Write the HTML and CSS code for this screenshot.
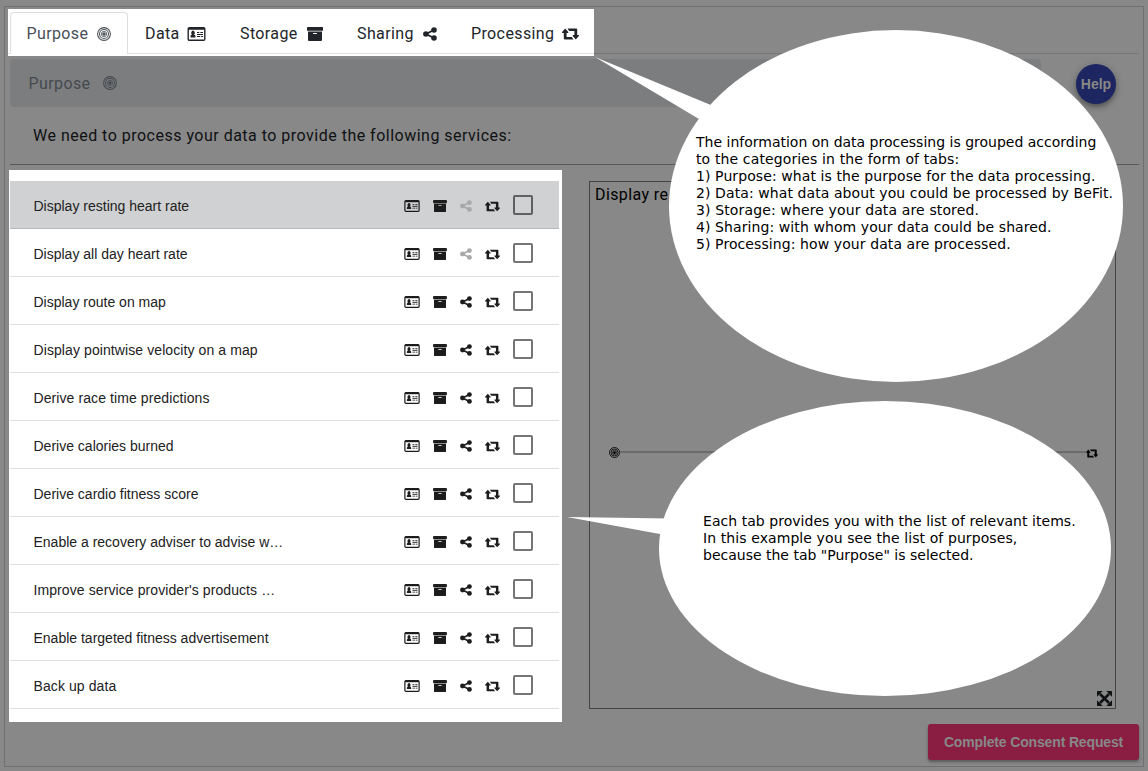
FILE: index.html
```html
<!DOCTYPE html>
<html lang="en">
<head>
<meta charset="utf-8">
<title>Consent request</title>
<link rel="stylesheet" href="styles.css">
</head>
<body>
<svg class="sprite" aria-hidden="true">
  <symbol id="target" viewBox="0 0 16 16"><g fill="none" stroke="currentColor" stroke-width="1.2"><circle cx="8" cy="8" r="7.3"/><circle cx="8" cy="8" r="5.100"/></g><circle cx="8" cy="8" r="3.100" fill="none" stroke="currentColor" stroke-width=".9"/><circle cx="8" cy="8" r="2" fill="currentColor"/></symbol>
  <symbol id="card" viewBox="0 0 18 14"><rect x=".7" y=".7" width="16.6" height="12.6" rx="1.2" fill="none" stroke="currentColor" stroke-width="1.4"/><path fill="currentColor" d="M1 1h16v1.7H1zM3 10.5V9.2q0-1.6 1.6-1.6a1.8 2.1 0 1 1 1.8 0Q8 7.6 8 9.2v1.3zM9.5 5h2.3v1.1H9.5zM12.8 5h2.7v1.1h-2.7zM9.5 7h6v1h-6zM9.500 9h3v1h-3zM13.300 9h2.200v1h-2.200z"/></symbol>
  <symbol id="archive" viewBox="0 0 16 14"><path fill="currentColor" fill-rule="evenodd" d="M.6 0h14.800q.6 0 .6.600V3.300q0 .5-.5.500H.5Q0 3.800 0 3.300V.6Q0 0 .6 0zM1 4.500h14V13q0 1-1 1H2q-1 0-1-1zM6.400 6q-.4 0-.4.500t.4.500h3.200q.4 0 .4-.500T9.600 6z"/></symbol>
  <symbol id="share" viewBox="0 0 14 14"><path d="M11 3 3 7l8 4" fill="none" stroke="currentColor" stroke-width="1.900"/><g fill="currentColor"><circle cx="11" cy="3" r="2.800"/><circle cx="2.900" cy="7" r="2.800"/><circle cx="11" cy="11" r="2.800"/></g></symbol>
  <symbol id="retweet" viewBox="0 0 17 12"><path fill="currentColor" d="M3.200.5 6.300 4.100q.4.800-.4.800H4.600v4.200h5.200l1.700 2.400H2.700q-.9 0-.9-.9V4.900H.500q-.8 0-.4-.8zM13.800 11.500l-3.100-3.600q-.4-.8.4-.8h1.300V2.900H7.200L5.500.5h8.800q.9 0 .9.900v5.700h1.300q.8 0 .4.800z"/></symbol>
  <symbol id="expand" viewBox="0 0 15 15"><path d="m3 3 9 9M12 3l-9 9" stroke="currentColor" stroke-width="2.600"/><path fill="currentColor" d="M0 .700Q0 0 .700 0h5L0 5.700zM15 .700Q15 0 14.300 0h-5L15 5.700zM0 14.300q0 .7.700.7h5L0 9.300zM15 14.300q0 .7-.7.700h-5L15 9.300z"/></symbol>
</svg>

<main class="frame">
  <nav class="tabs">
    <div class="tab-list">
      <a class="tab tab-purpose active"><span>Purpose</span><svg class="i-target"><use href="#target"/></svg></a>
      <a class="tab tab-data"><span>Data</span><svg class="i-card"><use href="#card"/></svg></a>
      <a class="tab tab-storage"><span>Storage</span><svg class="i-archive"><use href="#archive"/></svg></a>
      <a class="tab tab-sharing"><span>Sharing</span><svg class="i-share"><use href="#share"/></svg></a>
      <a class="tab tab-processing"><span>Processing</span><svg class="i-retweet"><use href="#retweet"/></svg></a>
    </div>
  </nav>
  <header class="heading">
    <div class="crumb"><span>Purpose</span><svg class="i-target"><use href="#target"/></svg></div>
    <button class="help">Help</button>
  </header>
  <p class="intro">We need to process your data to provide the following services:</p>
  <section class="content">
    <ul class="list" id="list"></ul>
    <div class="graph">
      <div class="graph-title">Display re</div>
      <div class="edge"><svg class="node-target"><use href="#target"/></svg><i></i><svg class="node-retweet"><use href="#retweet"/></svg></div>
      <svg class="expand"><use href="#expand"/></svg>
    </div>
  </section>
  <footer class="actions"><button class="complete">Complete Consent Request</button></footer>
</main>

<aside class="callout callout-tabs">
  <svg viewBox="595 30 528 352"><path d="M595 57 712 105.500 699 119z"/><ellipse cx="896" cy="206" rx="227" ry="176"/></svg>
  <div class="note"><p>The information on data processing is grouped according</p><p class="wider">to the categories in the form of tabs:</p><p class="wide">1) Purpose: what is the purpose for the data processing.</p><p class="wide">2) Data: what data about you could be processed by BeFit.</p><p class="wider">3) Storage: where your data are stored.</p><p class="wide">4) Sharing: with whom your data could be shared.</p><p class="wide">5) Processing: how your data are processed.</p></div>
</aside>
<aside class="callout callout-list">
  <svg viewBox="567 401 544 295"><path d="M567 517 668 518.500V535.500z"/><ellipse cx="885" cy="548.500" rx="226" ry="147.500"/></svg>
  <div class="note"><p class="slight">Each tab provides you with the list of relevant items.</p><p class="wide">In this example you see the list of purposes,</p><p>because the tab "Purpose" is selected.</p></div>
</aside>
<script src="list.js"></script>
</body>
</html>
```

FILE: styles.css
```css
* { box-sizing: border-box; }
body { margin: 0; width: 1148px; height: 771px; overflow: hidden; padding: 6px 4px; background: #888; color: #0f1113; font: 16px/20px Roboto, sans-serif; }
svg { display: block; flex: none; }
p, ul { margin: 0; padding: 0; }
button { border: 0; padding: 0; font: bold 14px "Liberation Sans", Arial, sans-serif; }
.sprite { position: absolute; width: 0; height: 0; }

.frame { width: 1140px; height: 761px; border: 1px solid #6e7073; padding: 2px 4px 0 3px; display: flex; flex-direction: column; }
.tabs { height: 47px; background: linear-gradient(#777, #777) 2px 44px / 1129px 1px no-repeat; }
.tab-list { width: 586px; height: 47px; padding: 3px 0 2px 2px; display: flex; background: linear-gradient(#dee2e6, #dee2e6) 0 44px / 586px 1px no-repeat #fff; }
.tab { flex: none; height: 42px; display: flex; align-items: center; justify-content: space-between; padding: 1px 17px 0; color: #212529; }
.tab.active { background: #fff; border: 1px solid #dcdfe2; border-bottom: 0; border-radius: 4px 4px 0 0; padding: 0 16px 0 15.500px; color: #495057; }
.tab span { letter-spacing: .38px; padding-top: 1px; }
.tab.active span { padding-top: 0; }
.tab-purpose { width: 118px; }
.tab-data { width: 95px; }
.tab-storage { width: 117px; }
.tab-sharing { width: 114px; }
.tab-processing { width: 142px; }
.i-target { width: 14px; height: 14px; }
.i-card { width: 19px; height: 14px; }
.i-archive { width: 16px; height: 14px; }
.i-share { width: 14px; height: 14px; }
.i-retweet { width: 17px; height: 12px; }

.heading { display: flex; align-items: center; margin: 3px 0 0 2px; height: 48px; }
.crumb { width: 1031px; height: 48px; border-radius: 4px; background: #7c7d7f; color: #464a4f; display: flex; align-items: center; gap: 12px; padding: 0 0 0 18.500px; }
.crumb span { letter-spacing: .4px; padding-top: 2px; }
.help { width: 40px; height: 40px; margin: 2px 0 0 35px; border-radius: 50%; background: #1d2660; color: #888; box-shadow: 0 3px 5px rgba(0,0,0,.3), 0 2px 10px rgba(0,0,0,.15); }
.intro { height: 58px; margin-left: 2px; padding: 19px 0 0 23px; border-bottom: 1px solid #595959; letter-spacing: .49px; }

.content { display: flex; align-items: flex-start; margin: 5px 0 0 1px; height: 552px; }
.list { width: 553px; height: 552px; padding: 11px 3px 0 1px; background: #fff; list-style: none; }
.row { height: 48px; display: flex; align-items: center; padding: 1px 26px 0 23.500px; border-bottom: 1px solid #dfdfdf; font: 14px "Liberation Sans", Arial, sans-serif; color: #212121; }
.row.selected { background: #d0d1d3; border-color: #b6b8ba; }
.label { flex: 1; padding-top: 2px; }
.loose { letter-spacing: .09px; }
.i { color: #1c1c1c; margin-top: 2px; }
.off { color: #a8a8a8; }
.row .i-card { width: 16px; height: 12px; margin-right: 13px; }
.row .i-archive { width: 14px; height: 12px; margin-right: 13px; }
.row .i-share { width: 12px; height: 12px; margin-right: 13px; }
.row .i-retweet { width: 15px; height: 11px; margin-right: 13px; }
.check { width: 20px; height: 20px; border: 2px solid #757575; border-radius: 2px; }
.selected .check { border-color: #5f6062; }

.graph { width: 527px; height: 528px; margin: 11px 0 0 27px; border: 1px solid #444; padding: 3px 3px 2px 5px; display: flex; flex-direction: column; color: #000; }
.graph-title { letter-spacing: .4px; }
.edge { display: flex; align-items: center; margin: 241px 14px 0 14px; height: 12px; }
.edge i { flex: 1; height: 2px; background: #6b6b6b; }
.node-target { width: 11px; height: 11px; margin-top: 1px; }
.node-retweet { width: 12px; height: 9px; margin-top: 2px; }
.expand { width: 15px; height: 15px; margin: auto 0 0 auto; color: #0f1113; }
.actions { display: flex; justify-content: flex-end; padding-top: 2px; }
.complete { width: 211px; height: 36px; border-radius: 3px; background: #891d42; color: #888; letter-spacing: -.15px; box-shadow: 0 2px 3px rgba(0,0,0,.35); }

.callout { position: absolute; color: #000; font: 14px/17px "DejaVu Sans", Verdana, sans-serif; white-space: nowrap; }
.callout > svg { position: absolute; inset: 0; width: 100%; height: 100%; fill: #fff; }
.callout .note { position: relative; }
.callout-tabs { left: 595px; top: 30px; width: 528px; height: 352px; padding: 103.500px 0 0 101px; }
.callout-list { left: 567px; top: 401px; width: 544px; height: 295px; padding: 111.500px 0 0 136px; }
.slight { letter-spacing: .04px; }
.wide { letter-spacing: .09px; }
.wider { letter-spacing: .13px; }
```

FILE: list.js
```js
const items = [
  "Display resting heart rate", "Display all day heart rate", "Display route on map",
  "Display pointwise velocity on a map", "Derive race time predictions", "Derive calories burned",
  "Derive cardio fitness score", "Enable a recovery adviser to advise w…",
  "Improve service provider's products …", "Enable targeted fitness advertisement", "Back up data"
];
const loose = [3, 4, 8, 10];
const icon = (name, off) => `<svg class="i i-${name}${off ? " off" : ""}"><use href="#${name}"/></svg>`;
document.getElementById("list").innerHTML = items.map((text, n) =>
  `<li class="row${n ? "" : " selected"}"><span class="label${loose.includes(n) ? " loose" : ""}">${text}</span>${icon("card")}${icon("archive")}${icon("share", n < 2)}${icon("retweet")}<span class="check"></span></li>`
).join("");
```
